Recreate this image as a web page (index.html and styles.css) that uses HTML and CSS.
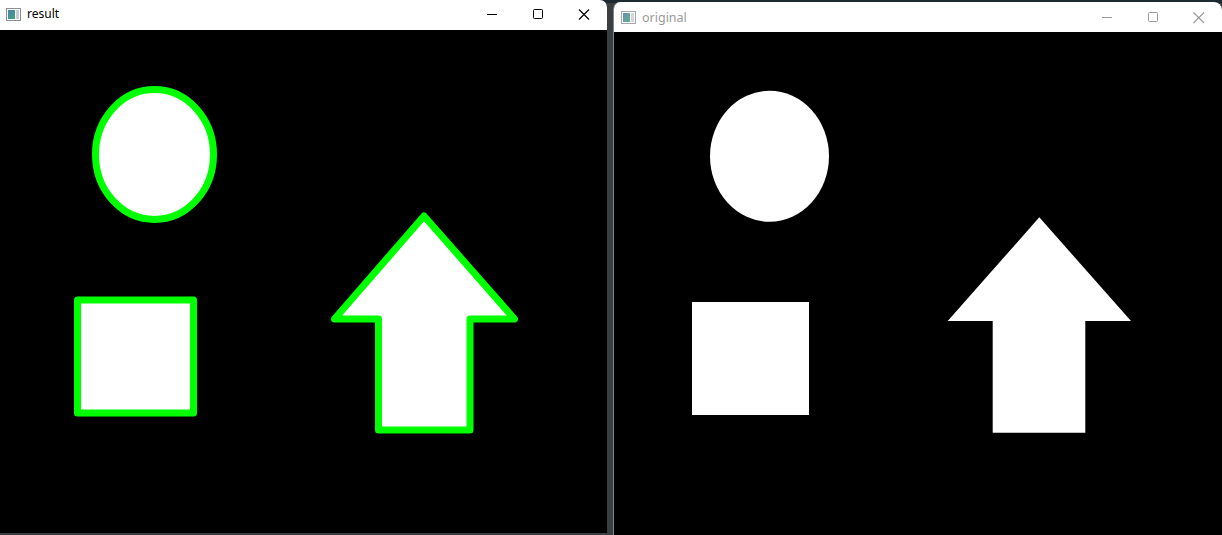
FILE: index.html
```html
<!DOCTYPE html>
<html>
<head>
<meta charset="utf-8">
<link rel="stylesheet" href="styles.css">
</head>
<body>
<div class="desk">
  <div class="win active">
    <div class="titlebar">
      <svg class="appicon" width="15" height="13" viewBox="0 0 15 13">
        <defs>
          <linearGradient id="g1" x1="0" y1="0" x2="1" y2="1">
            <stop offset="0" stop-color="#4f7fb0"/>
            <stop offset="1" stop-color="#3aa77a"/>
          </linearGradient>
        </defs>
        <rect x="0.5" y="0.5" width="14" height="12" fill="#fff" stroke="#8a8f94"/>
        <rect x="2" y="2" width="7" height="9" fill="url(#g1)"/>
        <rect x="10" y="2" width="3" height="9" fill="#c9cdd1"/>
      </svg>
      <span class="title">result</span>
      <div class="controls">
        <svg class="ctl" width="46" height="30" viewBox="0 0 46 30"><path d="M18 14.5 H28" stroke="#000" stroke-width="1"/></svg>
        <svg class="ctl" width="46" height="30" viewBox="0 0 46 30"><rect x="18.5" y="9.5" width="9" height="9" rx="1" fill="none" stroke="#000"/></svg>
        <svg class="ctl" width="46" height="30" viewBox="0 0 46 30"><path d="M18 9.5 L28 19.5 M28 9.5 L18 19.5" stroke="#000" stroke-width="1.1"/></svg>
      </div>
    </div>
    <div class="content">
      <svg class="canvas" width="607" height="503" viewBox="0 0 607 503">
        <g fill="#fff" stroke="#00ff00" stroke-width="7" stroke-linejoin="round">
          <ellipse cx="154.5" cy="124.5" rx="59" ry="65"/>
          <rect x="77.5" y="270" width="116" height="113"/>
          <polygon points="424,186 514.5,289 470,289 470,400 378.5,400 378.5,289 334.5,289"/>
        </g>
      </svg>
    </div>
  </div>
  <div class="win inactive">
    <div class="titlebar">
      <svg class="appicon" width="15" height="13" viewBox="0 0 15 13">
        <defs>
          <linearGradient id="g2" x1="0" y1="0" x2="1" y2="1">
            <stop offset="0" stop-color="#6d8fb5"/>
            <stop offset="1" stop-color="#5fae8c"/>
          </linearGradient>
        </defs>
        <rect x="0.5" y="0.5" width="14" height="12" fill="#fff" stroke="#a5a9ad"/>
        <rect x="2" y="2" width="7" height="9" fill="url(#g2)"/>
        <rect x="10" y="2" width="3" height="9" fill="#d3d6d9"/>
      </svg>
      <span class="title">original</span>
      <div class="controls">
        <svg class="ctl" width="46" height="30" viewBox="0 0 46 30"><path d="M18 15.5 H28" stroke="#999" stroke-width="1"/></svg>
        <svg class="ctl" width="46" height="30" viewBox="0 0 46 30"><rect x="18.5" y="10.5" width="9" height="9" rx="1" fill="none" stroke="#999"/></svg>
        <svg class="ctl" width="46" height="30" viewBox="0 0 46 30"><path d="M17.5 10.5 L28 21 M28 10.5 L17.5 21" stroke="#999" stroke-width="1.1"/></svg>
      </div>
    </div>
    <div class="content">
      <svg class="canvas" width="608" height="503" viewBox="0 0 608 503">
        <g fill="#fff">
          <ellipse cx="155.5" cy="124.2" rx="59.5" ry="65.5"/>
          <rect x="78" y="270" width="117" height="113"/>
          <polygon points="425.3,185.3 517,289 471.3,289 471.3,400.7 378.7,400.7 378.7,289 333.7,289"/>
        </g>
      </svg>
    </div>
  </div>
</div>
</body>
</html>
```

FILE: styles.css
```css
html, body {
  margin: 0;
  padding: 0;
  width: 1222px;
  height: 535px;
  overflow: hidden;
  background: #3b3e40;
}

.desk {
  display: flex;
  align-items: flex-start;
  gap: 6px;
  height: 535px;
  background: linear-gradient(#1c2a31 0, #1c2a31 3px, #3b3e40 3px);
}

.win {
  display: flex;
  flex-direction: column;
  background: #000;
  overflow: hidden;
  border-radius: 7px 7px 0 0;
}

.win.active {
  width: 607px;
  height: 533px;
  border-top-left-radius: 0;
}

.win.inactive {
  width: 608px;
  height: 533px;
  margin-top: 2px;
  border-left: 1px solid #7c8a92;
  border-top-right-radius: 8px;
}

.titlebar {
  height: 30px;
  flex: 0 0 30px;
  background: #fff;
  display: flex;
  align-items: center;
  font-family: "Noto Sans", "Open Sans", sans-serif;
  font-size: 12px;
}

.appicon {
  margin-left: 6px;
  margin-right: 6px;
  flex: 0 0 auto;
}

.active .appicon {
  margin-top: -2px;
}

.inactive .appicon {
  margin-left: 7px;
  margin-top: 1px;
}

.title {
  color: #000;
  line-height: 30px;
  margin-top: -2px;
}

.inactive .title {
  color: #9a9a9a;
  font-size: 12.5px;
  margin-top: 1px;
}

.controls {
  margin-left: auto;
  display: flex;
  height: 30px;
}

.ctl {
  display: block;
}

.content {
  flex: 1 1 auto;
  background: #000;
}

.canvas {
  display: block;
}
```
